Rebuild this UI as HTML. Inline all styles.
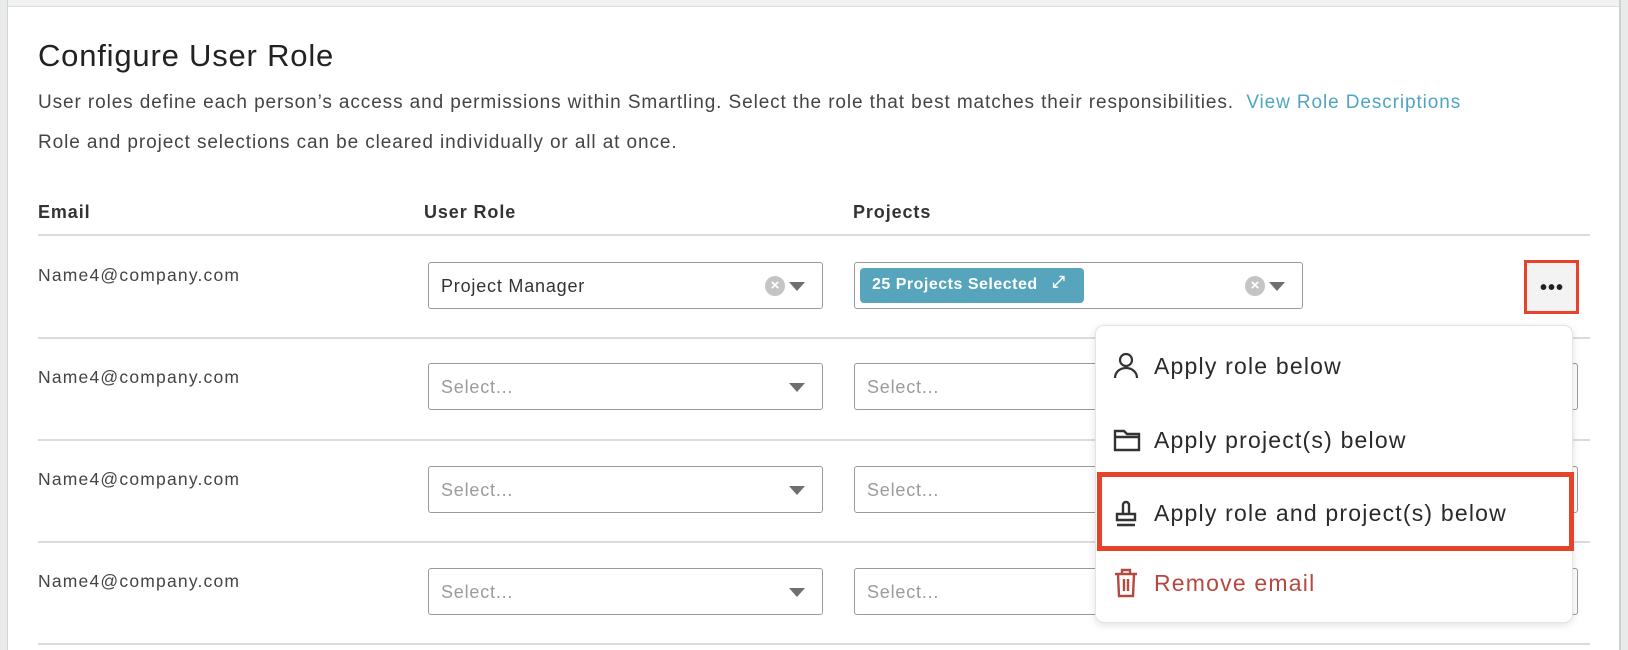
<!DOCTYPE html>
<html><head><meta charset="utf-8"><style>
*{box-sizing:border-box;margin:0;padding:0}
body{width:1628px;height:650px;overflow:hidden;background:#fff;font-family:"Liberation Sans",sans-serif;color:#333;position:relative}
.a{position:absolute;white-space:nowrap}
.line{position:absolute;left:38px;width:1552px;height:2px;background:#d9dcdd}
.sel{position:absolute;border:1px solid #9a9a9a;border-radius:3px;background:#fff;height:47px}
.sel .t{position:absolute;left:12px;top:13px;font-size:18px;color:#9b9b9b;letter-spacing:0.8px}
.arr{position:absolute;width:0;height:0;border-left:8px solid transparent;border-right:8px solid transparent;border-top:9px solid #6f6f6f;top:19px}
.clr{position:absolute;width:20px;height:20px;border-radius:50%;background:#c4c4c4;top:13px;color:#fff;font-size:15px;line-height:20px;text-align:center;font-weight:bold}
.email{font-size:17.5px;color:#444;left:38px;letter-spacing:1.2px}
.mi{position:absolute;left:1154px;font-size:23px;color:#2a2a2a;letter-spacing:1.2px}
.d{font-size:19px;color:#444;letter-spacing:0.9px}
.h{font-size:18px;font-weight:bold;color:#333;letter-spacing:0.9px}
</style></head><body>
<div class="a" style="left:0;top:0;width:1628px;height:7px;background:#f1f2f2;border-bottom:1px solid #ddd"></div>
<div class="a" style="left:0;top:0;width:8px;height:650px;background:#e9eaea;border-right:1px solid #d4d4d4"></div>
<div class="a" style="left:1619px;top:0;width:9px;height:650px;background:#e9eaea;border-left:2px solid #d0d0d0"></div>

<div class="a" style="left:38px;top:38px;font-size:31px;color:#222;letter-spacing:0.8px">Configure User Role</div>
<div class="a d" style="left:38px;top:92px">User roles define each person’s access and permissions within Smartling. Select the role that best matches their responsibilities.&nbsp; <span style="color:#4fa5c2">View Role Descriptions</span></div>
<div class="a d" style="left:38px;top:132px">Role and project selections can be cleared individually or all at once.</div>

<div class="a h" style="left:38px;top:202px">Email</div>
<div class="a h" style="left:424px;top:202px">User Role</div>
<div class="a h" style="left:853px;top:202px">Projects</div>
<div class="line" style="top:234px"></div>

<div class="a email" style="top:265px">Name4@company.com</div>
<div class="sel" style="left:428px;top:262px;width:395px"><span class="t" style="color:#333">Project Manager</span><div class="clr" style="left:336px">×</div><div class="arr" style="left:360px"></div></div>
<div class="sel" style="left:854px;top:262px;width:449px">
<div class="a" style="left:5px;top:5px;width:224px;height:35px;background:#57a5bd;border-radius:4px;color:#fff;font-weight:bold;font-size:16px;padding:8px 0 0 12px;letter-spacing:0.5px">25 Projects Selected <span style="position:absolute;left:192px;top:6px;font-size:16px">⤢</span></div>
<div class="clr" style="left:390px">×</div><div class="arr" style="left:414px"></div></div>
<div class="a" style="left:1524px;top:260px;width:55px;height:54px;border:3px solid #e5432a;background:#f3f3f3"><div style="position:absolute;left:13px;top:22px;font-size:20px;line-height:6px;letter-spacing:1px;color:#222;font-weight:bold">•••</div></div>
<div class="line" style="top:337px"></div>

<div class="a email" style="top:367px">Name4@company.com</div>
<div class="sel" style="left:428px;top:363px;width:395px"><span class="t">Select...</span><div class="arr" style="left:360px"></div></div>
<div class="sel" style="left:854px;top:363px;width:724px"><span class="t">Select...</span></div>
<div class="line" style="top:439px"></div>

<div class="a email" style="top:469px">Name4@company.com</div>
<div class="sel" style="left:428px;top:466px;width:395px"><span class="t">Select...</span><div class="arr" style="left:360px"></div></div>
<div class="sel" style="left:854px;top:466px;width:724px"><span class="t">Select...</span></div>
<div class="line" style="top:541px"></div>

<div class="a email" style="top:571px">Name4@company.com</div>
<div class="sel" style="left:428px;top:568px;width:395px"><span class="t">Select...</span><div class="arr" style="left:360px"></div></div>
<div class="sel" style="left:854px;top:568px;width:724px"><span class="t">Select...</span></div>
<div class="line" style="top:643px"></div>

<div class="a" style="left:1095px;top:325px;width:478px;height:298px;background:#fff;border:1px solid #e4e4e4;border-radius:9px;box-shadow:0 2px 8px rgba(0,0,0,.12)"></div>
<svg class="a" style="left:1113px;top:352px" width="26" height="28" viewBox="0 0 26 28" fill="none" stroke="#333" stroke-width="2.2"><circle cx="13" cy="8" r="6"/><path d="M2 26c0-6 5-10 11-10s11 4 11 10"/></svg>
<div class="mi" style="top:353px">Apply role below</div>
<svg class="a" style="left:1113px;top:428px" width="28" height="24" viewBox="0 0 28 24" fill="none" stroke="#333" stroke-width="2.4"><path d="M2 3h9l3 3h12v16H2z M2 9h24"/></svg>
<div class="mi" style="top:427px">Apply project(s) below</div>
<div class="a" style="left:1097px;top:472px;width:477px;height:79px;border:5px solid #e5432a"></div>
<svg class="a" style="left:1113px;top:499px" width="26" height="30" viewBox="0 0 26 30" fill="none" stroke="#333" stroke-width="2.4"><path d="M10 15V6a3 3 0 0 1 6 0v9"/><path d="M4 15h18v6H4z"/><path d="M4 26h18"/></svg>
<div class="mi" style="top:500px">Apply role and project(s) below</div>
<svg class="a" style="left:1113px;top:568px" width="26" height="30" viewBox="0 0 26 30" fill="none" stroke="#b5483f" stroke-width="2.4"><path d="M2 6h22M9 6V2h8v4M5 6l1 22h14l1-22M11 11v12M15 11v12"/></svg>
<div class="mi" style="top:570px;color:#b5483f">Remove email</div>
</body></html>
